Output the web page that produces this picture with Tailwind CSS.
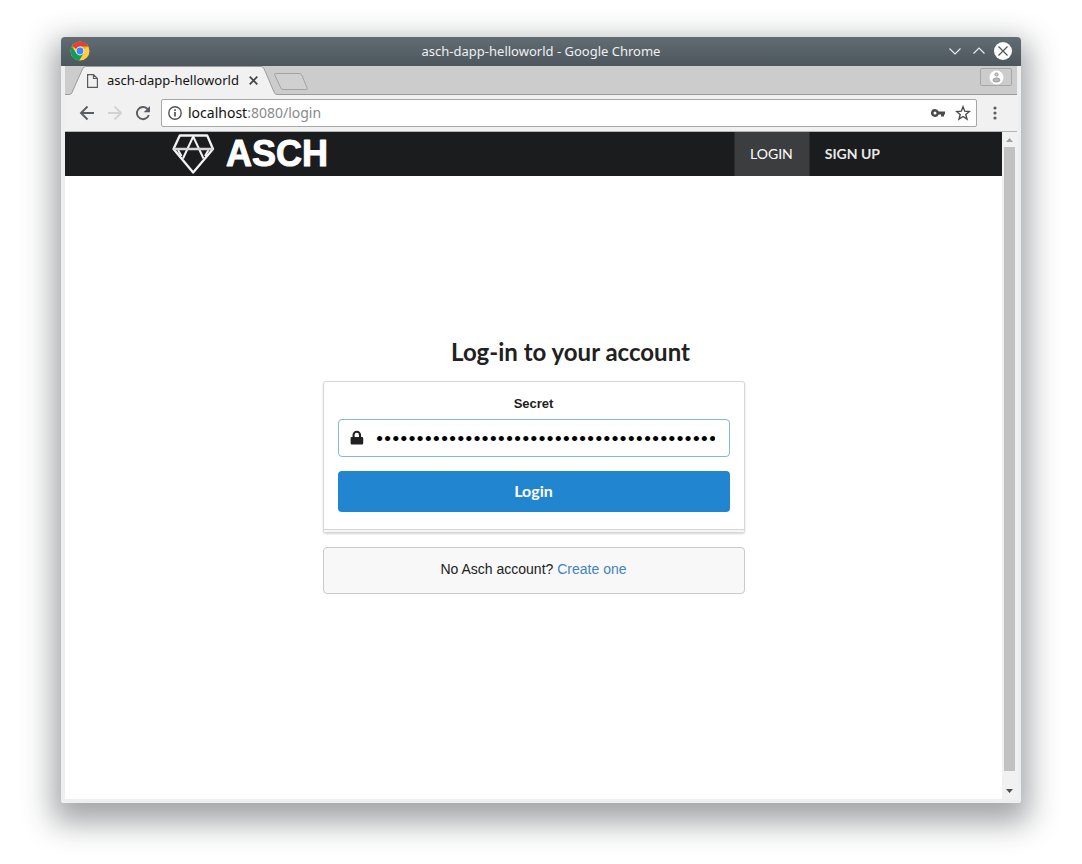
<!DOCTYPE html>
<html lang="en">
<head>
<meta charset="utf-8">
<meta name="viewport" content="width=device-width, initial-scale=1">
<title>asch-dapp-helloworld</title>
<script src="https://cdn.jsdelivr.net/npm/@tailwindcss/browser@4"></script>
</head>
<body class="bg-white">
<div class="min-h-screen flex px-[61px] pt-[37px] pb-[61px]">
  <div class="flex-1 flex flex-col rounded-t-[4px] rounded-b-[2px] bg-[#eeeff1] shadow-[0_12px_30px_8px_rgba(35,40,45,0.42)]">
    <!-- Title bar -->
    <header class="h-[29px] grid grid-cols-[1fr_auto_1fr] items-center px-2 pb-px rounded-t-[4px] bg-linear-to-b from-[#626c73] to-[#4d565d] text-[#eff0f1]">
      <svg class="size-5 ml-px" viewBox="0 0 20 20">
        <circle cx="10" cy="10" r="9.500" fill="#ffcd40"/>
        <path d="M10 10 1.800 5.300A9.500 9.500 0 0 1 18.500 5.700L10 5.700Z" fill="#db4437"/>
        <path d="M1.800 5.300A9.500 9.500 0 0 0 9.200 19.500L13.700 12.200 10 14 6.200 12.100Z" fill="#0f9d58"/>
        <path d="M10 5.700H18.500L14 8Z" fill="#e8b32c"/>
        <circle cx="10" cy="10" r="4.400" fill="#f1f1f1"/>
        <circle cx="10" cy="10" r="3.400" fill="#4285f4"/>
      </svg>
      <div class="text-[13px] leading-5 font-['Noto_Sans',sans-serif]">asch-dapp-helloworld - Google Chrome</div>
      <div class="flex items-center justify-end gap-3">
        <button aria-label="Minimize" class="w-3"><svg class="block w-3 h-3" viewBox="0 0 12 12" fill="none" stroke="currentColor" stroke-width="1.100"><path d="M.5 3.500 6 9l5.500-5.500"/></svg></button>
        <button aria-label="Maximize" class="w-3"><svg class="block w-3 h-3" viewBox="0 0 12 12" fill="none" stroke="currentColor" stroke-width="1.100"><path d="M.5 8.500 6 3l5.500 5.500"/></svg></button>
        <button aria-label="Close" class="-ml-1"><svg class="block size-[20px]" viewBox="0 0 20 20"><circle cx="10" cy="10" r="9" fill="#fcfcfc"/><path d="m5.500 5.500 9 9m0-9-9 9" stroke="#4d565d" stroke-width="1.200"/></svg></button>
      </div>
    </header>

    <div class="flex-1 flex flex-col mx-1 mb-1">
      <!-- Tab strip -->
      <div class="h-[29px] flex bg-[#ccc] shadow-[inset_0_-1px_0_#9b9b9b]">
        <div class="relative w-[212px] flex items-center pl-[22px]">
          <svg class="absolute inset-0 w-[212px] h-[29px]" viewBox="0 0 212 29">
            <path d="M0 28.500H4.500Q6 28.500 7 26.500L17.500 3Q18.500 .5 20.500 .5H196Q198 .5 199.200 3L209 26Q210 28.500 212 28.500V29H0Z" fill="#f1f1f1"/>
            <path d="M0 0H18L6.500 27.500Q6 28 4.500 28H0Z" fill="#ccc"/>
            <path d="M0 28.500H4.500Q6 28.500 7 26.500L17.500 3Q18.500 .5 20.500 .5H196Q198 .5 199.200 3L209 26Q210 28.500 212 28.500" fill="none" stroke="#9b9b9b"/>
          </svg>
          <svg class="relative w-[11px] h-[14px]" viewBox="0 0 11 14" fill="none" stroke="#5a5a5a" stroke-width="1.200"><path d="M.6.6H6.500L10.400 4.500V13.400H.6ZM6.500 .6V4.500H10.400"/></svg>
          <span class="relative ml-[9px] pb-px text-[13px] leading-5 text-[#111] font-['Noto_Sans',sans-serif]">asch-dapp-helloworld</span>
          <button aria-label="Close tab" class="relative ml-[10px]"><svg class="block size-[9px]" viewBox="0 0 9 9" stroke="#444" stroke-width="1.700"><path d="m.7.7 7.600 7.600m0-7.600L.7 8.300"/></svg></button>
        </div>
        <button aria-label="New tab" class="self-start mt-[6px] -ml-[4px]"><svg class="block w-[36px] h-[19px]" viewBox="0 0 36 19"><path d="M2.500 1.500H26Q28 1.500 28.800 3.200L34.200 16Q34.800 17.500 33.500 17.500H10Q8.500 17.500 7.800 16L1.800 3Q1.200 1.500 2.500 1.500Z" fill="#d0d0d0" stroke="#a3a3a3"/></svg></button>
        <button aria-label="Profile" class="ml-auto mt-[2px] mr-[5px] w-[32px] h-[18px] flex items-center justify-center rounded-[2px] border border-[#a6a6a6]">
          <svg class="size-[15px]" viewBox="0 0 15 15"><circle cx="7.500" cy="7.500" r="7" fill="#fff"/><circle cx="7.500" cy="4.500" r="1.600" fill="#ccc" stroke="#999"/><ellipse cx="7.500" cy="10" rx="3.500" ry="2" fill="#bbb" stroke="#999"/></svg>
        </button>
      </div>
      <!-- Toolbar -->
      <div class="h-[37px] flex items-center pl-[14px] pr-[20px] bg-[#f1f1f1] border-b border-[#b5b5b5]">
        <button aria-label="Back"><svg class="block size-4" viewBox="0 0 16 16" fill="none" stroke="#5a5e63" stroke-width="1.900"><path d="M15 8H2.500M8.500 1.500 2 8l6.500 6.500"/></svg></button>
        <button aria-label="Forward" class="ml-3"><svg class="block size-4" viewBox="0 0 16 16" fill="none" stroke="#d2d2d4" stroke-width="1.900"><path d="M1 8H13.500M7.500 1.500 14 8l-6.500 6.500"/></svg></button>
        <button aria-label="Reload" class="ml-3"><svg class="block size-4" viewBox="0 0 16 16"><path d="M13.800 10A6.100 6.100 0 1 1 12.300 3.700L13.300 4.700" fill="none" stroke="#5a5e63" stroke-width="1.900"/><path d="M15 1V7.300H8.700Z" fill="#5a5e63"/></svg></button>
        <div class="flex-1 h-[28px] ml-[10px] flex items-center pl-[6px] pr-[5px] bg-white border border-[#a6a6a6] rounded-[2px]">
          <svg class="size-[14px]" viewBox="0 0 14 14"><circle cx="7" cy="7" r="6.200" fill="none" stroke="#4f5358" stroke-width="1.400"/><path d="M7 6V10.500M7 3.300V5" stroke="#4f5358" stroke-width="1.700"/></svg>
          <div class="ml-[6px] flex-1 text-sm leading-5 text-[#8a8a8a] font-['Noto_Sans',sans-serif]"><span class="text-[#111]">localhost</span>:8080/login</div>
          <button aria-label="Saved passwords"><svg class="block w-[14px] h-[10px]" viewBox="0 0 14 10"><path d="M4 1A4 4 0 1 0 7.700 6.500H10V8.500H13V6.500H14V3.500H7.700A4 4 0 0 0 4 1ZM4 3.500A1.500 1.500 0 1 1 4 6.500 1.500 1.500 0 1 1 4 3.500Z" fill="#4a4a4a" fill-rule="evenodd"/></svg></button>
          <button aria-label="Bookmark" class="ml-[10px]"><svg class="block size-4" viewBox="0 0 16 16"><path d="m8 1.800 1.700 4.400 4.700.3-3.600 3 1.200 4.600L8 11.500l-4 2.600 1.200-4.600-3.600-3 4.700-.3Z" fill="none" stroke="#4a4a4a" stroke-width="1.400"/></svg></button>
        </div>
        <button aria-label="Menu" class="ml-[16px]"><svg class="block w-1 h-[14px]" viewBox="0 0 4 14" fill="#5a5e63"><circle cx="2" cy="2" r="1.600"/><circle cx="2" cy="7" r="1.600"/><circle cx="2" cy="12" r="1.600"/></svg></button>
      </div>

      <!-- Page -->
      <div class="flex-1 flex">
        <div class="flex-1 flex flex-col bg-white">
          <nav class="h-[44px] bg-[#1b1c1d] font-[Lato,sans-serif] text-sm text-[#e8e8e8]">
            <div class="h-full max-w-[723px] mx-auto flex">
              <a href="#" aria-label="ASCH" class="flex items-center">
                <svg class="w-[160px] h-[44px]" viewBox="0 0 160 44">
                  <g fill="none" stroke="#f4f2f2" stroke-width="2.300" stroke-linejoin="round">
                    <path d="M7.800 3.500H35.200L41 17 21.200 40.500 1.500 17Z"/>
                    <path d="M11 26.500 21.200 4.500 31.500 26.500M6 18 9.500 24M36.500 18 33 24" stroke-width="2"/>
                    <path d="M1.500 17H41" stroke="#d6d2d4"/>
                  </g>
                  <text x="54" y="34" font-family="Liberation Sans, Arial, sans-serif" font-weight="700" font-size="36" fill="#fff" stroke="#fff" stroke-width="1" stroke-linejoin="round">ASCH</text>
                </svg>
              </a>
              <a href="#" class="ml-auto flex items-center pl-[15px] pr-4 bg-[#3c3d3e] border-x border-[#2c2d2e] text-white">LOGIN</a>
              <a href="#" class="flex items-center px-[15px] font-bold">SIGN UP</a>
            </div>
          </nav>
          <main class="w-full max-w-[422px] mx-auto pt-[160px] text-center text-sm text-[#212121] font-['Liberation_Sans',sans-serif]">
            <h2 class="pl-[74px] text-2xl leading-8 font-bold font-[Lato,sans-serif]">Log-in to your account</h2>
            <form class="mt-[13px] rounded-[3px] border border-[#d8d8d9] bg-white shadow-[0_1px_2px_rgba(34,36,38,0.2)]">
              <div class="px-[14px] pt-[14px] pb-[17px]">
                <label for="secret" class="block text-[13px] leading-4 font-bold">Secret</label>
                <div class="relative mt-[7px]">
                  <svg class="absolute left-[12px] top-[11px] w-[14px] h-[15px]" viewBox="0 0 14 15"><path d="M2.500 7V5A4.300 4.300 0 0 1 11.100 5V7H12Q13.200 7 13.200 8.200V13.300Q13.200 14.500 12 14.500H1.800Q.6 14.500 .6 13.300V8.200Q.6 7 1.800 7ZM4.600 7H9V5A2.200 2.200 0 0 0 4.600 5Z" fill="#212121" fill-rule="evenodd"/></svg>
                  <input id="secret" type="password" autocomplete="off" value="helloworldhelloworldhelloworldhelloworldhellowo" class="block w-full h-[38px] pl-[37px] pr-[14px] pb-[2px] rounded-[4px] border border-[#85b7d9] text-sm text-black font-[Lato,sans-serif] outline-none">
                </div>
                <button type="button" class="block w-full h-[41px] pb-[2px] mt-[14px] rounded-[4px] bg-[#2185d0] text-white text-base font-bold font-[Lato,sans-serif]">Login</button>
              </div>
              <div class="h-[3px] border-t border-[#d4d4d5] bg-[#f6f6f6]"></div>
            </form>
            <p class="mt-[14px] h-[47px] pt-[11px] leading-5 rounded-[4px] border border-[#c9caca] bg-[#f8f8f8]">No Asch account? <a href="#" class="text-[#4183c4]">Create one</a></p>
          </main>
        </div>
        <!-- Scrollbar -->
        <div class="w-[15px] flex flex-col items-center bg-[#f1f1f1]">
          <svg class="w-[15px] h-[15px]" viewBox="0 0 15 15"><path d="M4 10H11L7.500 6Z" fill="#a0a0a0"/></svg>
          <div class="flex-1 w-[11px] mb-[13px] bg-[#c1c1c1]"></div>
          <svg class="w-[15px] h-[15px]" viewBox="0 0 15 15"><path d="M4 5H11L7.500 9Z" fill="#505050"/></svg>
        </div>
      </div>
    </div>
  </div>
</div>
</body>
</html>
